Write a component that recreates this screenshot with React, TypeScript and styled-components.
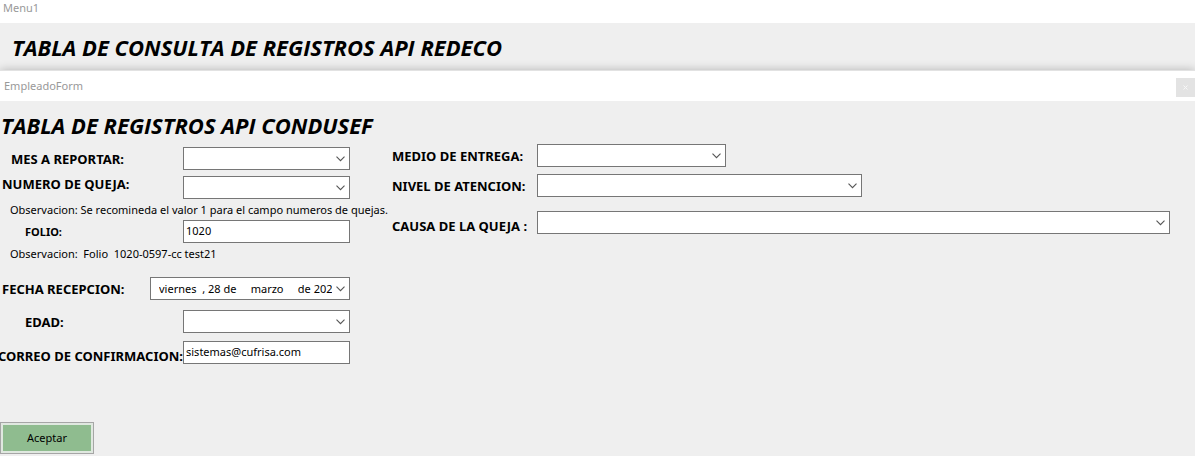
import React from "react";
import styled, { createGlobalStyle } from "styled-components";

const GlobalStyle = createGlobalStyle`
  *, *::before, *::after { box-sizing: border-box; }
  body {
    margin: 0;
    background: #efefef;
    color: #000;
    font-family: "Noto Sans", "Open Sans", sans-serif;
    font-size: 11px;
    line-height: 16px;
  }
  input, select, button { font: inherit; color: inherit; }
`;

const Desktop = styled.div`
  display: flex;
  flex-direction: column;
  min-height: 100vh;
`;

const TitleBar = styled.header<{ $height: number }>`
  display: flex;
  align-items: center;
  justify-content: space-between;
  height: ${(p) => p.$height}px;
  padding-left: 4px;
  background: #fff;
  color: #999;
`;

const MenuTitle = styled(TitleBar)`
  padding-left: 3px;
  padding-bottom: 7px;
`;

const Heading = styled.h1`
  margin: 0;
  font-family: "Open Sans", "Noto Sans", sans-serif;
  font-size: 22px;
  line-height: 24px;
  font-weight: 700;
  font-style: italic;
  white-space: nowrap;
`;

const Banner = styled.section`
  padding: 12px 12px 11px;
`;

const ChildWindow = styled.main`
  display: flex;
  flex: 1;
  flex-direction: column;
  background: #efefef;
  border-top: 1px solid #e2e2e2;
  box-shadow: 0 0 9px rgba(0, 0, 0, 0.25);
`;

const CloseButton = styled.button`
  display: grid;
  place-items: center;
  width: 19px;
  height: 19px;
  margin-top: 3px;
  padding: 0;
  border: 0;
  background: #e3e3e3;
`;

const Form = styled.form`
  display: flex;
  flex: 1;
  flex-direction: column;
  justify-content: space-between;
  padding: 12px 0 2px;
`;

const FormHeading = styled(Heading)`
  padding-left: 1px;
`;

const Columns = styled.div`
  display: grid;
  grid-template-columns: 350px 1fr;
  column-gap: 42px;
  margin-top: 7px;
`;

const Column = styled.div`
  display: flex;
  flex-direction: column;
  min-width: 0;
`;

const Row = styled.div<{ $top?: number; $indent?: number; $align?: string; $justify?: string }>`
  display: flex;
  align-items: ${(p) => p.$align ?? "center"};
  justify-content: ${(p) => p.$justify ?? "space-between"};
  margin-top: ${(p) => p.$top ?? 0}px;
  padding-left: ${(p) => p.$indent ?? 0}px;
`;

const WideRow = styled(Row)`
  display: grid;
  grid-template-columns: 145px 1fr;
  padding-right: 25px;
`;

const Label = styled.label<{ $small?: boolean }>`
  font-size: ${(p) => (p.$small ? 11 : 13)}px;
  font-weight: 700;
  white-space: nowrap;
`;

const Note = styled.p`
  margin: 3px 0;
  padding-left: 10px;
  line-height: 15px;
  white-space: pre;
`;

const TextBox = styled.input`
  flex-shrink: 0;
  width: 167px;
  height: 23px;
  padding: 0 2px 3px;
  border: 1px solid #767676;
  border-radius: 0;
  background: #fff;
  outline: 0;
`;

const Combo = styled.div<{ $width?: number }>`
  position: relative;
  width: ${(p) => (p.$width ? `${p.$width}px` : "100%")};
  height: 23px;
  border: 1px solid #767676;
  background: #fff;
`;

const Select = styled.select`
  display: block;
  width: 100%;
  height: 100%;
  border: 0;
  background: transparent;
  appearance: none;
  outline: 0;
`;

const DateInput = styled.input`
  display: block;
  width: calc(100% - 17px);
  height: 100%;
  padding: 0 0 0 8px;
  border: 0;
  background: transparent;
  outline: 0;
`;

const Arrow = styled.svg`
  position: absolute;
  top: 8px;
  right: 4px;
  pointer-events: none;
`;

const Accept = styled.button`
  width: 94px;
  height: 32px;
  padding: 0;
  border: 1px solid #a6a6a6;
  background: #8fbc8f;
  box-shadow: inset 0 0 0 2px #e0e8e0;
`;

const Chevron = () => (
  <Arrow width="9" height="6" viewBox="0 0 9 6" aria-hidden="true">
    <path d="M0.5 0.7 4.5 4.7 8.5 0.7" fill="none" stroke="#555" strokeWidth="1.1" />
  </Arrow>
);

const ComboBox = ({ id, width }: { id: string; width?: number }) => (
  <Combo $width={width}>
    <Select id={id} defaultValue="">
      <option value="" />
    </Select>
    <Chevron />
  </Combo>
);

export default function App() {
  return (
    <>
      <GlobalStyle />
      <Desktop>
        <MenuTitle $height={23}>Menu1</MenuTitle>
        <Banner>
          <Heading>TABLA DE CONSULTA DE REGISTROS API REDECO</Heading>
        </Banner>
        <ChildWindow>
          <TitleBar $height={30}>
            EmpleadoForm
            <CloseButton type="button" aria-label="Cerrar">
              <svg width="5" height="5" viewBox="0 0 5 5" aria-hidden="true">
                <path d="M0.5 0.5 4.5 4.5M4.5 0.5 0.5 4.5" stroke="#f7f7f7" />
              </svg>
            </CloseButton>
          </TitleBar>
          <Form onSubmit={(e) => e.preventDefault()}>
            <div>
              <FormHeading as="h2">TABLA DE REGISTROS API CONDUSEF</FormHeading>
              <Columns>
                <Column>
                  <Row $top={3} $indent={11}>
                    <Label htmlFor="mes">MES A REPORTAR:</Label>
                    <ComboBox id="mes" width={167} />
                  </Row>
                  <Row $top={6} $indent={2} $align="flex-start">
                    <Label htmlFor="numero">NUMERO DE QUEJA:</Label>
                    <ComboBox id="numero" width={167} />
                  </Row>
                  <Note>Observacion: Se recomineda el valor 1 para el campo numeros de quejas.</Note>
                  <Row $indent={25}>
                    <Label htmlFor="folio" $small>FOLIO:</Label>
                    <TextBox id="folio" defaultValue="1020" />
                  </Row>
                  <Note>{"Observacion:  Folio  1020-0597-cc test21"}</Note>
                  <Row $top={13} $indent={2}>
                    <Label htmlFor="fecha">FECHA RECEPCION:</Label>
                    <Combo $width={200}>
                      <DateInput id="fecha" defaultValue="viernes  , 28 de     marzo     de 2025" />
                      <Chevron />
                    </Combo>
                  </Row>
                  <Row $top={10} $indent={25}>
                    <Label htmlFor="edad">EDAD:</Label>
                    <ComboBox id="edad" width={167} />
                  </Row>
                  <Row $top={8} $align="flex-end" $justify="flex-end">
                    <Label htmlFor="correo">CORREO DE CONFIRMACION:</Label>
                    <TextBox id="correo" defaultValue="sistemas@cufrisa.com" />
                  </Row>
                </Column>
                <Column>
                  <WideRow>
                    <Label htmlFor="medio">MEDIO DE ENTREGA:</Label>
                    <ComboBox id="medio" width={189} />
                  </WideRow>
                  <WideRow $top={7}>
                    <Label htmlFor="nivel">NIVEL DE ATENCION:</Label>
                    <ComboBox id="nivel" width={325} />
                  </WideRow>
                  <WideRow $top={14} $align="end">
                    <Label htmlFor="causa">CAUSA DE LA QUEJA :</Label>
                    <ComboBox id="causa" />
                  </WideRow>
                </Column>
              </Columns>
            </div>
            <Accept type="submit">Aceptar</Accept>
          </Form>
        </ChildWindow>
      </Desktop>
    </>
  );
}
